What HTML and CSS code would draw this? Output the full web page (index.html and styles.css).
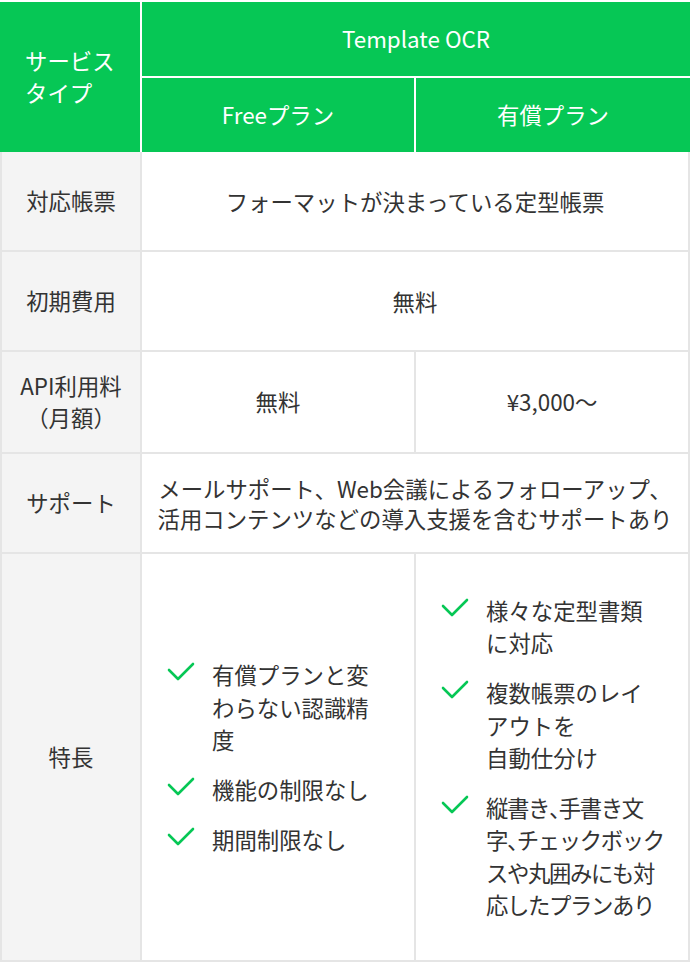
FILE: index.html
```html
<!DOCTYPE html>
<html lang="ja">
<head>
<meta charset="utf-8">
<title>Template OCR</title>
<link rel="stylesheet" href="styles.css">
</head>
<body>
<div class="plan-table">
  <div class="head">
    <div class="hcell hcell--type">サービス<br>タイプ</div>
    <div class="hcell hcell--wide">Template OCR</div>
    <div class="hcell">Freeプラン</div>
    <div class="hcell">有償プラン</div>
  </div>
  <div class="body">
    <div class="label">対応帳票</div>
    <div class="cell cell--wide">フォーマットが決まっている定型帳票</div>

    <div class="label">初期費用</div>
    <div class="cell cell--wide">無料</div>

    <div class="label">API利用料<br>（月額）</div>
    <div class="cell">無料</div>
    <div class="cell">¥3,000〜</div>

    <div class="label">サポート</div>
    <div class="cell cell--wide">メールサポート、Web会議によるフォローアップ、<br>活用コンテンツなどの導入支援を含むサポートあり</div>

    <div class="label">特長</div>
    <div class="cell cell--list">
      <ul class="features">
        <li class="feature"><svg class="check" viewBox="0 0 28 20" width="28" height="20"><path d="M2 8 L11 17 L26 2"/></svg><span>有償プランと変<br>わらない認識精<br>度</span></li>
        <li class="feature"><svg class="check" viewBox="0 0 28 20" width="28" height="20"><path d="M2 8 L11 17 L26 2"/></svg><span>機能の制限なし</span></li>
        <li class="feature"><svg class="check" viewBox="0 0 28 20" width="28" height="20"><path d="M2 8 L11 17 L26 2"/></svg><span>期間制限なし</span></li>
      </ul>
    </div>
    <div class="cell cell--list">
      <ul class="features">
        <li class="feature"><svg class="check" viewBox="0 0 28 20" width="28" height="20"><path d="M2 8 L11 17 L26 2"/></svg><span>様々な定型書類<br>に対応</span></li>
        <li class="feature"><svg class="check" viewBox="0 0 28 20" width="28" height="20"><path d="M2 8 L11 17 L26 2"/></svg><span>複数帳票のレイ<br>アウトを<br>自動仕分け</span></li>
        <li class="feature feature--tight"><svg class="check" viewBox="0 0 28 20" width="28" height="20"><path d="M2 8 L11 17 L26 2"/></svg><span>縦書き<span class="punct">、</span>手書き文<br>字<span class="punct">、</span>チェックボック<br>スや丸囲みにも対<br>応したプランあり</span></li>
      </ul>
    </div>
  </div>
</div>
</body>
</html>
```
FILE: styles.css
```css
* { box-sizing: border-box; }
html, body {
  margin: 0;
  padding: 0;
  background: #fff;
}
body {
  font-family: "Noto Sans CJK JP", "Noto Sans", sans-serif;
  font-size: 22.4px;
  line-height: 1.42;
  color: #333;
}
.plan-table {
  width: 690px;
}
.head {
  display: grid;
  grid-template-columns: 140px 272px 274px;
  grid-template-rows: 74px 74px;
  gap: 2px;
  padding-top: 2px;
  background: #fff;
}
.hcell {
  background: #06c755;
  color: #fff;
  display: flex;
  align-items: center;
  justify-content: center;
  text-align: center;
}
.hcell--type {
  grid-row: span 2;
  justify-content: flex-start;
  text-align: left;
  padding-left: 25px;
}
.hcell--wide {
  grid-column: span 2;
}
.body {
  display: grid;
  grid-template-columns: 138px 272px 272px;
  grid-template-rows: 98px 98px 100px 98px 406px;
  gap: 2px;
  padding: 0 2px 2px;
  background: #e5e5e5;
}
.label {
  background: #f4f4f4;
  display: flex;
  align-items: center;
  justify-content: center;
  text-align: center;
}
.cell {
  background: #fff;
  display: flex;
  align-items: center;
  justify-content: center;
  text-align: center;
}
.cell--wide {
  grid-column: span 2;
  line-height: 1.36;
}
.cell--list {
  justify-content: flex-start;
  text-align: left;
  padding-left: 25px;
}
.features {
  list-style: none;
  margin: 0;
  padding: 0;
  display: flex;
  flex-direction: column;
  gap: 18px;
  line-height: 1.44;
}
.feature {
  display: flex;
  align-items: flex-start;
  white-space: nowrap;
}
.feature--tight {
  letter-spacing: -1.4px;
}
.punct {
  font-feature-settings: "halt" 1;
}
.check {
  flex: none;
  margin-top: 4px;
  margin-right: 17px;
  fill: none;
  stroke: #06c755;
  stroke-width: 2.6;
  stroke-linecap: round;
  stroke-linejoin: round;
}
```
